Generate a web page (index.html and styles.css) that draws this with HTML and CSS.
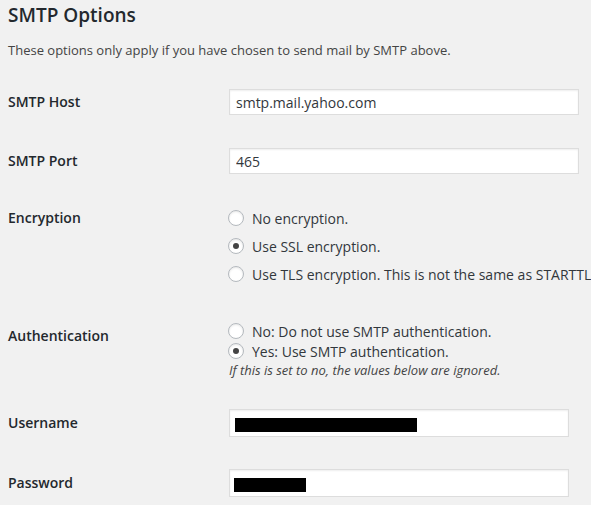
FILE: index.html
```html
<!DOCTYPE html>
<html>
<head>
<meta charset="utf-8">
<link rel="stylesheet" href="styles.css">
</head>
<body>
<div class="page">
  <h3 class="title">SMTP Options</h3>
  <p class="intro">These options only apply if you have chosen to send mail by SMTP above.</p>

  <div class="row row-host">
    <div class="label">SMTP Host</div>
    <div class="field"><input class="text wide" type="text" value="smtp.mail.yahoo.com"></div>
  </div>

  <div class="row row-port">
    <div class="label">SMTP Port</div>
    <div class="field"><input class="text wide" type="text" value="465"></div>
  </div>

  <div class="row row-enc">
    <div class="label">Encryption</div>
    <div class="field radios-spaced">
      <label class="opt"><span class="radio"></span>No encryption.</label>
      <label class="opt"><span class="radio checked"></span>Use SSL encryption.</label>
      <label class="opt"><span class="radio"></span>Use TLS encryption. This is not the same as STARTTLS. For most servers SSL is the recommended option.</label>
    </div>
  </div>

  <div class="row row-auth">
    <div class="label">Authentication</div>
    <div class="field radios-tight">
      <label class="opt"><span class="radio"></span>No: Do not use SMTP authentication.</label>
      <label class="opt"><span class="radio checked"></span>Yes: Use SMTP authentication.</label>
      <p class="desc">If this is set to no, the values below are ignored.</p>
    </div>
  </div>

  <div class="row row-user">
    <div class="label">Username</div>
    <div class="field"><div class="box"><span class="redact redact-user"></span></div></div>
  </div>

  <div class="row row-pass">
    <div class="label">Password</div>
    <div class="field"><div class="box"><span class="redact redact-pass"></span></div></div>
  </div>
</div>
</body>
</html>
```
FILE: styles.css
```css
html, body {
  margin: 0;
  padding: 0;
  background: #f1f1f1;
  overflow: hidden;
}
.page {
  width: 591px;
  height: 505px;
  overflow: hidden;
  padding-left: 8px;
  box-sizing: border-box;
  font-family: "Open Sans", "Liberation Sans", sans-serif;
  color: #444;
}
.title {
  margin: 0;
  padding-top: 2px;
  font-size: 19px;
  line-height: 26px;
  font-weight: 600;
  color: #23282d;
}
.intro {
  margin: 12px 0 0;
  font-size: 13px;
  line-height: 20px;
  color: #444;
}
.row {
  display: flex;
  align-items: flex-start;
}
.label {
  width: 221px;
  flex: none;
  font-size: 14px;
  font-weight: 600;
  color: #23282d;
  line-height: 20px;
}
.field {
  flex: none;
  width: 362px;
}
.text {
  display: block;
  box-sizing: border-box;
  width: 350px;
  height: 26px;
  margin: 0;
  padding: 0 6px;
  border: 1px solid #ddd;
  box-shadow: inset 0 1px 2px rgba(0,0,0,0.07);
  background: #fff;
  font-family: "Open Sans", "Liberation Sans", sans-serif;
  font-size: 14px;
  color: #32373c;
  outline: none;
}
.row-host { margin-top: 29px; }
.row-host .label, .row-port .label { padding-top: 3px; }
.row-port { margin-top: 33px; }
.row-enc { margin-top: 34px; }
.row-enc .label { padding-top: 0; }
.radios-spaced .opt { margin-bottom: 8px; }
.opt {
  display: flex;
  align-items: center;
  height: 20px;
  white-space: nowrap;
  font-size: 14px;
  color: #32373c;
}
.radio {
  flex: none;
  box-sizing: border-box;
  width: 16px;
  height: 16px;
  margin: 0 8px 0 -1px;
  border: 1px solid #b4b9be;
  border-radius: 50%;
  background: #fff;
  box-shadow: inset 0 1px 2px rgba(0,0,0,0.1);
  position: relative;
}
.radio.checked::before {
  content: "";
  position: absolute;
  left: 4px;
  top: 4px;
  width: 6px;
  height: 6px;
  border-radius: 50%;
  background: #444;
}
.row-auth { margin-top: 29px; }
.row-auth .label { padding-top: 5px; }
.radios-tight .opt { margin-bottom: 0; }
.desc {
  margin: 0;
  font-size: 13px;
  font-style: italic;
  line-height: 18px;
  color: #444;
}
.row-user { margin-top: 30px; }
.row-user .label, .row-pass .label { padding-top: 4px; }
.row-pass { margin-top: 32px; }
.box {
  box-sizing: border-box;
  width: 340px;
  height: 28px;
  border: 1px solid #ddd;
  box-shadow: inset 0 1px 2px rgba(0,0,0,0.07);
  background: #fff;
  padding: 8px 0 0 5px;
}
.redact {
  display: block;
  height: 14px;
  background: #000;
}
.redact-user { width: 182px; }
.redact-pass { width: 72px; margin-left: -1px; }
```
